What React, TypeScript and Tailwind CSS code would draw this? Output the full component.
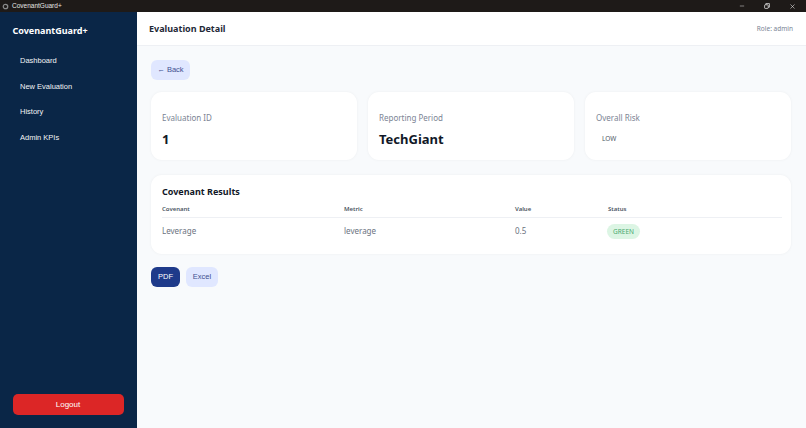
import { Minus, X } from "lucide-react"

const navItems = ["Dashboard", "New Evaluation", "History", "Admin KPIs"]

function InfoCard({ label, children }: { label: string; children: React.ReactNode }) {
  return (
    <div className="h-[68px] rounded-[11px] bg-white px-[11px] pt-[19px] shadow-[0_0_3px_rgba(15,23,42,0.05)]">
      <div className="text-[8px] leading-[13px] text-[#7b8494]">{label}</div>
      {children}
    </div>
  )
}

export default function App() {
  return (
    <div className="flex h-[428px] w-[806px] flex-col overflow-hidden bg-[#f8fafc] font-['Noto_Sans',sans-serif]">
      {/* Window title bar */}
      <div className="flex h-3 shrink-0 items-center bg-[#1e1a18] text-[#e5e5e5]">
        <svg viewBox="0 0 10 10" className="ml-[2px] h-[7px] w-[7px]" fill="none" stroke="#8a8a8a" strokeWidth="1.8">
          <circle cx="5" cy="5" r="3.2" />
        </svg>
        <span className="ml-[3px] font-['Liberation_Sans',sans-serif] text-[6.5px]">CovenantGuard+</span>
        <div className="ml-auto flex items-center gap-[19px] pr-[10px]">
          <Minus className="h-[6px] w-[6px]" />
          <svg viewBox="0 0 10 10" className="h-[6px] w-[6px]" fill="none" stroke="currentColor" strokeWidth="1.3">
            <rect x="1" y="3" width="6" height="6" rx="1" />
            <path d="M3 3V1h6v6H7" />
          </svg>
          <X className="h-[7px] w-[7px]" />
        </div>
      </div>

      <div className="flex min-h-0 flex-1">
        {/* Sidebar */}
        <aside className="flex w-[136.5px] shrink-0 flex-col bg-[#0a2647] pb-[13px] pl-[12.5px] pr-[13px] text-white">
          <div className="mt-3 text-[9px] font-bold leading-[14px]">CovenantGuard+</div>
          <nav className="mt-[15.5px] flex flex-col gap-[11px] pl-[7.5px] font-['Liberation_Sans',sans-serif] text-[7.5px] text-[#f3f4f6]">
            {navItems.map((item) => (
              <div key={item} className="flex h-[14.5px] items-center">
                {item}
              </div>
            ))}
          </nav>
          <button className="mt-auto h-[21px] rounded-[5px] bg-[#dc2626] font-['Liberation_Sans',sans-serif] text-[8px] text-white">
            Logout
          </button>
        </aside>

        <div className="flex min-w-0 flex-1 flex-col">
          {/* Header */}
          <header className="flex h-[34px] shrink-0 items-center justify-between border-b border-[#eef0f4] bg-white pl-[12.5px] pr-[13px] pt-px">
            <h1 className="text-[9px] font-bold text-[#1f2937]">Evaluation Detail</h1>
            <span className="text-[6.5px] text-[#7b8494]">Role: admin</span>
          </header>

          {/* Content */}
          <main className="flex-1 pl-[14.5px] pr-[15px] pt-2">
            <button className="h-5 w-[39px] rounded-[6px] bg-[#e0e7ff] font-['Liberation_Sans',sans-serif] text-[7.5px] text-[#3f4f8f]">
              ← Back
            </button>

            <div className="mt-3 grid grid-cols-3 gap-[11px]">
              <InfoCard label="Evaluation ID">
                <div className="mt-[5px] text-[13px] font-bold leading-[20px] text-[#111827]">1</div>
              </InfoCard>
              <InfoCard label="Reporting Period">
                <div className="mt-[5px] text-[13px] font-bold leading-[20px] text-[#111827]">TechGiant</div>
              </InfoCard>
              <InfoCard label="Overall Risk">
                <div className="mt-[10px] pl-[6px] text-[6.5px] leading-[10px] text-[#4b5563]">LOW</div>
              </InfoCard>
            </div>

            <section className="mt-[15px] h-[79px] rounded-[11px] bg-white pl-[11px] pr-[9px] pt-[10px] shadow-[0_0_3px_rgba(15,23,42,0.05)]">
              <h2 className="text-[9px] font-bold leading-[14px] text-[#111827]">Covenant Results</h2>
              <div className="mt-[4px] grid h-[15px] grid-cols-[182px_171px_93px_1fr] items-center border-b border-[#eef0f4] text-[6px] font-semibold text-[#4b5563]">
                <span>Covenant</span>
                <span>Metric</span>
                <span>Value</span>
                <span>Status</span>
              </div>
              <div className="grid h-[27px] grid-cols-[182px_171px_93px_1fr] items-center text-[8px] text-[#6b7280]">
                <span>Leverage</span>
                <span>leverage</span>
                <span>0.5</span>
                <span>
                  <span className="-ml-px inline-block rounded-full bg-[#dcf5e4] px-[6px] py-[3px] text-[6.5px] leading-[9px] text-[#4aa86f]">
                    GREEN
                  </span>
                </span>
              </div>
            </section>

            <div className="mt-[13px] flex gap-[6px] font-['Liberation_Sans',sans-serif] text-[7.5px]">
              <button className="h-5 w-[29px] rounded-[6px] bg-[#1e3a8a] text-white">PDF</button>
              <button className="h-5 w-8 rounded-[6px] bg-[#e0e7ff] text-[#3f4f8f]">Excel</button>
            </div>
          </main>
        </div>
      </div>
    </div>
  )
}
